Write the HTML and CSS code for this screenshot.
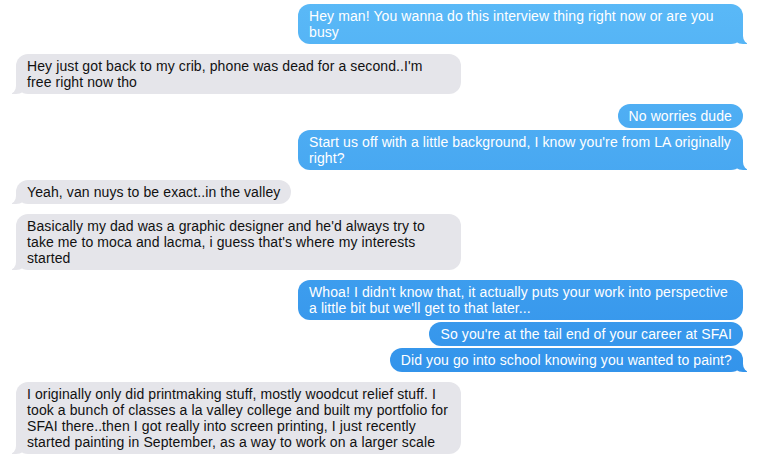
FILE: index.html
```html
<!DOCTYPE html>
<html>
<head lang="en">
    <meta charset="UTF-8">
    <title>Messages</title>
    <link rel="stylesheet" href="styles.css">
</head>
<body>
<div id="thread">
    <div class="msg out tail">Hey man! You wanna do this interview thing right now or are you busy</div>
    <div class="msg in tail">Hey just got back to my crib, phone was dead for a second..I'm free right now tho</div>
    <div class="msg out">No worries dude</div>
    <div class="msg out tail next">Start us off with a little background, I know you're from LA originally right?</div>
    <div class="msg in tail">Yeah, van nuys to be exact..in the valley</div>
    <div class="msg in tail">Basically my dad was a graphic designer and he'd always try to take me to moca and lacma, i guess that's where my interests started</div>
    <div class="msg out">Whoa! I didn't know that, it actually puts your work into perspective a little bit but we'll get to that later...</div>
    <div class="msg out next">So you're at the tail end of your career at SFAI</div>
    <div class="msg out tail next">Did you go into school knowing you wanted to paint?</div>
    <div class="msg in tail">I originally only did printmaking stuff, mostly woodcut relief stuff. I took a bunch of classes a la valley college and built my portfolio for SFAI there..then I got really into screen printing, I just recently started painting in September, as a way to work on a larger scale</div>
</div>
</body>
</html>
```

FILE: styles.css
```css
* {
    margin: 0;
    padding: 0;
}

body {
    background: #fff;
    font-family: "Liberation Sans", Arial, sans-serif;
    font-size: 14px;
    line-height: 16px;
    letter-spacing: 0.1px;
}

#thread {
    display: flex;
    flex-direction: column;
    align-items: flex-start;
    padding: 4px 16px 0 16px;
}

.msg {
    position: relative;
    max-width: 445px;
    box-sizing: border-box;
    padding: 4px 11px;
    border-radius: 12px;
    margin-top: 10px;
}

.msg:first-child {
    margin-top: 0;
}

.msg.next {
    margin-top: 2px;
}

.out {
    align-self: flex-end;
    color: #fff;
    background: linear-gradient(to bottom, #5ab9f7 0px, #2a8be8 460px) fixed;
}

.in {
    color: #111;
    background: #e5e5ea;
}

/* little curl at the bottom of the last bubble */
.tail::before,
.tail::after {
    content: "";
    position: absolute;
    bottom: 0;
    height: 12px;
}

.out.tail::before {
    z-index: -1;
    right: -4px;
    width: 14px;
    background: linear-gradient(to bottom, #5ab9f7 0px, #2a8be8 460px) fixed;
    border-bottom-left-radius: 10px 8px;
}

.out.tail::after {
    z-index: 1;
    right: -10px;
    width: 10px;
    background: #fff;
    border-bottom-left-radius: 7px 8px;
}

.in.tail::before {
    z-index: -1;
    left: -4px;
    width: 14px;
    background: #e5e5ea;
    border-bottom-right-radius: 10px 8px;
}

.in.tail::after {
    z-index: 1;
    left: -10px;
    width: 10px;
    background: #fff;
    border-bottom-right-radius: 7px 8px;
}
```
